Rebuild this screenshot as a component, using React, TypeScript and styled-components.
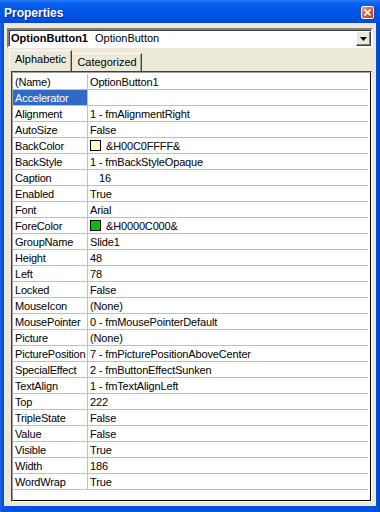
import React from 'react';
import styled, { createGlobalStyle } from 'styled-components';

const Global = createGlobalStyle`
  html, body { margin: 0; padding: 0; background: #fff; }
  body { width: 380px; height: 512px; overflow: hidden; }
`;

const Window = styled.div`
  width: 380px;
  height: 512px;
  display: flex;
  flex-direction: column;
  font-family: "Liberation Sans", Arial, sans-serif;
  font-size: 11px;
  color: #000;
  background: #0052e0;
`;

const TitleBar = styled.div`
  height: 23px;
  flex: none;
  display: flex;
  align-items: center;
  justify-content: space-between;
  padding: 0 6px 0 4px;
  box-sizing: border-box;
  background: linear-gradient(180deg, #2a7cf5 0px, #0a64f0 3px, #0058e8 8px, #0054e3 14px, #004fd9 20px, #0049d0 23px);
`;

const Title = styled.span`
  color: #fff;
  font-weight: bold;
  font-size: 12px;
  padding-top: 3px;
  text-shadow: 1px 1px 0 #0a2a8a;
`;

const CloseButton = styled.div`
  width: 13px;
  height: 13px;
  box-sizing: border-box;
  border: 1px solid #fff;
  border-radius: 2px;
  background: linear-gradient(135deg, #f0a080 0%, #e0603a 45%, #c23a14 100%);
  display: flex;
  align-items: center;
  justify-content: center;
  margin-top: 1px;
`;

const Frame = styled.div`
  flex: 1;
  display: flex;
  padding: 0 4px 6px 4px;
  background: linear-gradient(90deg, #2366e6 0px, #0052e0 2px, #0052e0 376px, #0041c4 380px);
`;

const Panel = styled.div`
  flex: 1;
  display: flex;
  flex-direction: column;
  background: #ece9d8;
`;

const Combo = styled.div`
  margin: 5px 3px 0 3px;
  height: 20px;
  box-sizing: border-box;
  display: flex;
  background: #fff;
  border: 2px solid;
  border-color: #808080 #fff #fff #808080;
  box-shadow: inset 1px 1px 0 #404040;
`;

const ComboText = styled.div`
  flex: 1;
  line-height: 16px;
  padding-left: 2px;
  white-space: nowrap;
  b { font-weight: bold; margin-right: 7px; }
`;

const DropButton = styled.div`
  width: 15px;
  margin: 1px 0 0 0;
  box-sizing: border-box;
  background: #ece9d8;
  border: 1px solid;
  border-color: #fff #404040 #404040 #fff;
  box-shadow: inset -1px -1px 0 #808080;
  display: flex;
  align-items: center;
  justify-content: center;
`;

const TabRow = styled.div`
  height: 21px;
  margin: 2px 0 0 5px;
  display: flex;
  align-items: flex-end;
  flex: none;
`;

const Tab = styled.div<{ $active?: boolean }>`
  height: ${(p) => (p.$active ? 21 : 18)}px;
  box-sizing: border-box;
  border-top: 1px solid #fff;
  border-left: ${(p) => (p.$active ? '1px solid #fff' : 'none')};
  border-right: 1px solid #404040;
  box-shadow: inset -1px 0 0 #aca899;
  padding: 1px ${(p) => (p.$active ? '5px' : '4px')} 0 5px;
  line-height: 15px;
  white-space: nowrap;
`;

const GridFrame = styled.div`
  flex: 1;
  margin: 0 4px 4px 7px;
  display: flex;
  border: 1px solid;
  border-color: #404040 #fff #fff #404040;
`;

const GridInner = styled.div`
  flex: 1;
  background: #fff;
  border: 1px solid;
  border-color: #a0a0a0 #000 #000 #a0a0a0;
  padding: 1px 2px 0 0;
`;

const Row = styled.div`
  display: flex;
  height: 16px;
  box-sizing: border-box;
  border-bottom: 1px solid #c0c0c0;
  line-height: 16px;
`;

const NameCell = styled.div<{ $selected?: boolean }>`
  width: 74px;
  flex: none;
  padding-left: 2px;
  box-sizing: border-box;
  overflow: hidden;
  white-space: nowrap;
  letter-spacing: -0.2px;
  background: ${(p) => (p.$selected ? '#316ac5' : 'transparent')};
  color: ${(p) => (p.$selected ? '#fff' : '#000')};
`;

const ValueCell = styled.div<{ $indent?: number }>`
  flex: 1;
  border-left: 1px solid #c0c0c0;
  padding-left: ${(p) => 2 + (p.$indent ?? 0)}px;
  display: flex;
  align-items: flex-start;
  white-space: nowrap;
  overflow: hidden;
  letter-spacing: -0.15px;
`;

const Swatch = styled.span<{ $color: string }>`
  width: 11px;
  height: 11px;
  margin-top: 2px;
  box-sizing: border-box;
  border: 1px solid #000;
  background: ${(p) => p.$color};
  margin-right: 5px;
  flex: none;
`;

type Prop = { name: string; value: string; swatch?: string; indent?: number; selected?: boolean };

const props: Prop[] = [
  { name: '(Name)', value: 'OptionButton1' },
  { name: 'Accelerator', value: '', selected: true },
  { name: 'Alignment', value: '1 - fmAlignmentRight' },
  { name: 'AutoSize', value: 'False' },
  { name: 'BackColor', value: '&H00C0FFFF&', swatch: '#ffffc0' },
  { name: 'BackStyle', value: '1 - fmBackStyleOpaque' },
  { name: 'Caption', value: '16', indent: 9 },
  { name: 'Enabled', value: 'True' },
  { name: 'Font', value: 'Arial' },
  { name: 'ForeColor', value: '&H0000C000&', swatch: '#00c000' },
  { name: 'GroupName', value: 'Slide1' },
  { name: 'Height', value: '48' },
  { name: 'Left', value: '78' },
  { name: 'Locked', value: 'False' },
  { name: 'MouseIcon', value: '(None)' },
  { name: 'MousePointer', value: '0 - fmMousePointerDefault' },
  { name: 'Picture', value: '(None)' },
  { name: 'PicturePosition', value: '7 - fmPicturePositionAboveCenter' },
  { name: 'SpecialEffect', value: '2 - fmButtonEffectSunken' },
  { name: 'TextAlign', value: '1 - fmTextAlignLeft' },
  { name: 'Top', value: '222' },
  { name: 'TripleState', value: 'False' },
  { name: 'Value', value: 'False' },
  { name: 'Visible', value: 'True' },
  { name: 'Width', value: '186' },
  { name: 'WordWrap', value: 'True' },
];

export default function App() {
  return (
    <>
      <Global />
      <Window>
        <TitleBar>
          <Title>Properties</Title>
          <CloseButton>
            <svg width="7" height="7" viewBox="0 0 7 7">
              <path d="M0.5 0.5 L6.5 6.5 M6.5 0.5 L0.5 6.5" stroke="#fff" strokeWidth="1.6" />
            </svg>
          </CloseButton>
        </TitleBar>
        <Frame>
          <Panel>
            <Combo>
              <ComboText>
                <b>OptionButton1</b>OptionButton
              </ComboText>
              <DropButton>
                <svg width="7" height="4" viewBox="0 0 7 4">
                  <polygon points="0,0 7,0 3.5,4" fill="#000" />
                </svg>
              </DropButton>
            </Combo>
            <TabRow>
              <Tab $active>Alphabetic</Tab>
              <Tab>Categorized</Tab>
            </TabRow>
            <GridFrame>
              <GridInner>
                {props.map((p) => (
                  <Row key={p.name}>
                    <NameCell $selected={p.selected}>{p.name}</NameCell>
                    <ValueCell $indent={p.indent}>
                      {p.swatch && <Swatch $color={p.swatch} />}
                      {p.value}
                    </ValueCell>
                  </Row>
                ))}
              </GridInner>
            </GridFrame>
          </Panel>
        </Frame>
      </Window>
    </>
  );
}
